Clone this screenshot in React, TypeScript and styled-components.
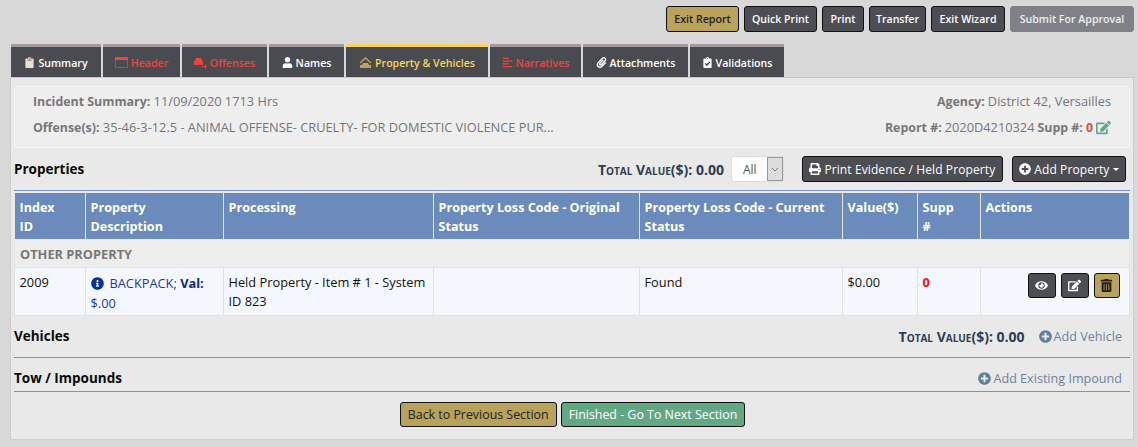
import React from "react"
import styled, { createGlobalStyle, css } from "styled-components"
import {
  FaAlignLeft,
  FaClipboard,
  FaClipboardCheck,
  FaEdit,
  FaEye,
  FaInfoCircle,
  FaPaperclip,
  FaPlusCircle,
  FaPrint,
  FaTrashAlt,
  FaUser,
} from "react-icons/fa"

const GlobalStyle = createGlobalStyle`
  html, body {
    margin: 0;
    padding: 0;
    background: #d8d8d8;
    font-family: "Open Sans", "Liberation Sans", sans-serif;
    font-size: 12px;
    color: #111;
  }
  * { box-sizing: border-box; }
`

const Page = styled.div`
  width: 1138px;
  height: 447px;
  padding: 6px 4px 0 10px;
  overflow: hidden;
`

const TopBar = styled.div`
  display: flex;
  justify-content: flex-end;
  gap: 5px;
  height: 26px;
  margin-bottom: 12px;
`

type Tone = "dark" | "gold" | "green" | "muted"

const toneStyles = {
  dark: css`
    background: #4d4e53;
    color: #fff;
    border-color: #111;
  `,
  gold: css`
    background: #b9a25a;
    color: #222;
    border-color: #111;
  `,
  green: css`
    background: #62a884;
    color: #fff;
    border-color: #111;
  `,
  muted: css`
    background: #808186;
    color: #eee;
    border-color: #808186;
  `,
}

const Button = styled.button<{ $tone: Tone }>`
  display: inline-flex;
  align-items: center;
  justify-content: center;
  height: 26px;
  padding: 0 7px;
  border: 1px solid;
  border-radius: 3px;
  font-family: inherit;
  font-size: 10.6px;
  font-weight: 600;
  white-space: nowrap;
  ${(p) => toneStyles[p.$tone]}
`

const TopButton = styled(Button)<{ $width: number }>`
  width: ${(p) => p.$width}px;
  padding: 0;
`

const TabRow = styled.div`
  display: flex;
  gap: 2px;
  height: 33px;
  padding-left: 1px;
`

const Tab = styled.div<{ $color: string; $width: number; $active?: boolean }>`
  display: flex;
  align-items: center;
  justify-content: center;
  gap: 3px;
  height: 33px;
  padding-top: 1px;
  width: ${(p) => p.$width}px;
  background: #4a4b50;
  border-top: 3px solid ${(p) => (p.$active ? "#f8d45c" : "#a39b9b")};
  color: ${(p) => p.$color};
  font-size: 10.6px;
  font-weight: 600;
  white-space: nowrap;
  svg {
    font-size: 11px;
  }
`

const Panel = styled.div`
  width: 1124px;
  height: 363px;
  background: #e9e9e9;
  border: 1px solid #cfcfcf;
  border-top-color: #c8c8c8;
  padding: 8px 0 0 3px;
`

const SummaryBox = styled.div`
  width: 1116px;
  height: 62px;
  padding: 1px 18px 0 18px;
  background: #eeeeee;
  border: 1px solid #f6f6f6;
  border-radius: 3px;
  display: grid;
  grid-template-columns: 1fr auto;
  grid-auto-rows: 26px;
  align-items: center;
  color: #76767a;
  font-size: 12.8px;
  b {
    font-size: 12.4px;
    font-weight: 700;
    color: #77777a;
  }
`

const RightCell = styled.div`
  display: flex;
  justify-content: flex-end;
  align-items: center;
  gap: 3px;
`

const SuppValue = styled.b`
  && {
    color: #f04a36;
  }
`

const SectionHead = styled.div<{ $height: number; $top?: number }>`
  display: flex;
  align-items: center;
  justify-content: space-between;
  height: ${(p) => p.$height}px;
  width: 1116px;
  padding-top: ${(p) => p.$top ?? 0}px;
  border-bottom: 1px solid #7f8fc0;
`

const SectionTitle = styled.div`
  font-size: 13.5px;
  font-weight: 700;
  color: #0a0a0a;
`

const HeadTools = styled.div`
  display: flex;
  align-items: center;
`

const TotalValue = styled.div<{ $gap: number }>`
  font-size: 14px;
  font-weight: 700;
  font-variant: small-caps;
  color: #2e3d52;
  margin-right: ${(p) => p.$gap}px;
`

const FakeSelect = styled.div`
  display: flex;
  width: 53px;
  height: 26px;
  margin-right: 18px;
  background: #fff;
  border: 1px solid #ddd;
  border-radius: 3px;
  color: #555;
  font-size: 12px;
  align-items: center;
  padding-left: 11px;
  position: relative;
`

const SelectArrow = styled.span`
  position: absolute;
  right: 0;
  top: 0;
  bottom: 0;
  width: 16px;
  background: #ddd;
  border: 1px solid #999;
  display: flex;
  align-items: center;
  justify-content: center;
`

const ToolButton = styled(Button)<{ $gap?: number }>`
  font-weight: 400;
  font-size: 12px;
  padding: 0 6.5px;
  gap: 3px;
  margin-left: ${(p) => p.$gap ?? 0}px;
  letter-spacing: 0.1px;
  svg {
    font-size: 12px;
  }
`

const Caret = styled.span`
  width: 0;
  height: 0;
  border-left: 3px solid transparent;
  border-right: 3px solid transparent;
  border-top: 3px solid #fff;
`

const TopRight = styled(HeadTools)`
  margin-right: 4px;
`

const Table = styled.table`
  width: 1115px;
  table-layout: fixed;
  border-collapse: collapse;
  font-size: 12.8px;
`

const Th = styled.th`
  height: 47px;
  padding: 5px 4.5px 0;
  vertical-align: top;
  text-align: left;
  background: #6a8bbb;
  color: #fff;
  font-size: 12.6px;
  font-weight: 700;
  line-height: 19px;
  border: 1px solid #e6e6e6;
  border-top: 2px solid #e9e9e9;
`

const GroupCell = styled.td`
  height: 28px;
  padding: 2px 5px 0;
  background: #ededed;
  color: #77777a;
  font-weight: 700;
  border: 1px solid #e2e2e2;
`

const Td = styled.td`
  height: 48px;
  padding: 5px 4.5px 0;
  vertical-align: top;
  line-height: 19px;
  background: #f4f8fe;
  color: #111;
  border: 1px solid #dfe2e6;
`

const DescLink = styled.span`
  display: inline-block;
  line-height: 20px;
  color: #1a3a9a;
  b {
    color: #0c2a80;
    font-weight: 700;
  }
  svg {
    color: #0c2f9c;
    font-size: 13px;
    vertical-align: -2px;
    margin-right: 6px;
  }
`

const ZeroSupp = styled.span`
  color: #f01010;
  font-weight: 700;
`

const ActionRow = styled.div`
  display: flex;
  justify-content: flex-end;
  gap: 5px;
  margin-right: 5px;
`

const IconButton = styled.button<{ $tone: Tone; $wide?: boolean }>`
  width: ${(p) => (p.$wide ? 28 : 26)}px;
  height: 25px;
  padding: 0;
  border: 1px solid;
  border-radius: 3px;
  display: flex;
  align-items: center;
  justify-content: center;
  font-size: 13px;
  ${(p) => toneStyles[p.$tone]}
`

const AddLink = styled.span`
  display: inline-flex;
  align-items: center;
  gap: 2px;
  color: #708299;
  font-size: 12.6px;
  margin-right: 8px;
  svg {
    color: #5f7f9f;
    font-size: 13px;
  }
`

const Footer = styled.div`
  display: flex;
  justify-content: center;
  gap: 4px;
  width: 1117px;
  margin-top: 10px;
`

const FooterButton = styled(Button)`
  font-weight: 400;
  font-size: 12.4px;
  padding: 0 7px;
  height: 25px;
`

const HeaderIcon = () => (
  <svg width="13" height="11" viewBox="0 0 13 11">
    <path d="M0 0h13v3H0z" fill="currentColor" />
    <path d="M.5 3v8M12.5 3v8M.5 10.5h12" stroke="currentColor" strokeOpacity="0.7" fill="none" />
  </svg>
)

const OffenseIcon = () => (
  <svg width="13" height="12" viewBox="0 0 13 12">
    <path d="M2 1h5l1 3h1v4H0V4h1z" fill="currentColor" />
    <path d="M8 9h3V7l2 2.5L11 12v-2H8z" fill="currentColor" />
  </svg>
)

const PropertyIcon = () => (
  <svg width="13" height="12" viewBox="0 0 13 12" color="#b9a25a">
    <path d="M1 6l5.5-5L12 6" fill="none" stroke="currentColor" strokeWidth="1.4" />
    <path d="M3 8l1-2h5l1 2h2v3H1V8z" fill="currentColor" />
  </svg>
)

const topButtons: { label: string; tone: Tone; width: number }[] = [
  { label: "Exit Report", tone: "gold", width: 73 },
  { label: "Quick Print", tone: "dark", width: 73 },
  { label: "Print", tone: "dark", width: 42 },
  { label: "Transfer", tone: "dark", width: 57 },
  { label: "Exit Wizard", tone: "dark", width: 74 },
  { label: "Submit For Approval", tone: "muted", width: 124 },
]

const tabs = [
  { label: "Summary", color: "#fff", width: 90, icon: <FaClipboard color="#e8e0c8" /> },
  { label: "Header", color: "#f0443a", width: 77, icon: <HeaderIcon /> },
  { label: "Offenses", color: "#f0443a", width: 85, icon: <OffenseIcon /> },
  { label: "Names", color: "#fff", width: 75, icon: <FaUser /> },
  { label: "Property & Vehicles", color: "#f8d45c", width: 142, active: true, icon: <PropertyIcon /> },
  { label: "Narratives", color: "#f0443a", width: 91, icon: <FaAlignLeft /> },
  { label: "Attachments", color: "#fff", width: 105, icon: <FaPaperclip /> },
  { label: "Validations", color: "#fff", width: 94, icon: <FaClipboardCheck /> },
]

const columns = [
  { label: <>Index<br />ID</>, width: 71 },
  { label: <>Property<br />Description</>, width: 138 },
  { label: "Processing", width: 210 },
  { label: <>Property Loss Code - Original<br />Status</>, width: 206 },
  { label: <>Property Loss Code - Current<br />Status</>, width: 203 },
  { label: "Value($)", width: 75 },
  { label: <>Supp<br />#</>, width: 63 },
  { label: "Actions", width: 149 },
]

export default function App() {
  return (
    <Page>
      <GlobalStyle />
      <TopBar>
        {topButtons.map((b) => (
          <TopButton key={b.label} $tone={b.tone} $width={b.width}>
            {b.label}
          </TopButton>
        ))}
      </TopBar>
      <TabRow>
        {tabs.map((t) => (
          <Tab key={t.label} $color={t.color} $width={t.width} $active={t.active}>
            {t.icon}
            {t.label}
          </Tab>
        ))}
      </TabRow>
      <Panel>
        <SummaryBox>
          <div>
            <b>Incident Summary:</b> 11/09/2020 1713 Hrs
          </div>
          <RightCell>
            <b>Agency:</b> District 42, Versailles
          </RightCell>
          <div>
            <b>Offense(s):</b> 35-46-3-12.5 - ANIMAL OFFENSE- CRUELTY- FOR DOMESTIC VIOLENCE PUR...
          </div>
          <RightCell>
            <b>Report #:</b> 2020D4210324 <b>Supp #:</b> <SuppValue>0</SuppValue>
            <FaEdit color="#62a884" size={15} />
          </RightCell>
        </SummaryBox>
        <SectionHead $height={43}>
          <SectionTitle>Properties</SectionTitle>
          <TopRight>
            <TotalValue $gap={7}>Total Value($): 0.00</TotalValue>
            <FakeSelect>
              All
              <SelectArrow>
                <svg width="8" height="5" viewBox="0 0 8 5">
                  <path d="M1 1l3 3 3-3" fill="none" stroke="#777" />
                </svg>
              </SelectArrow>
            </FakeSelect>
            <ToolButton $tone="dark">
              <FaPrint />
              Print Evidence / Held Property
            </ToolButton>
            <ToolButton $tone="dark" $gap={9}>
              <FaPlusCircle />
              Add Property
              <Caret />
            </ToolButton>
          </TopRight>
        </SectionHead>
        <Table>
          <colgroup>
            {columns.map((c, i) => (
              <col key={i} width={c.width} />
            ))}
          </colgroup>
          <thead>
            <tr>
              {columns.map((c, i) => (
                <Th key={i}>{c.label}</Th>
              ))}
            </tr>
          </thead>
          <tbody>
            <tr>
              <GroupCell colSpan={8}>OTHER PROPERTY</GroupCell>
            </tr>
            <tr>
              <Td>2009</Td>
              <Td>
                <DescLink>
                  <FaInfoCircle />
                  BACKPACK; <b>Val:</b>
                  <br />
                  $.00
                </DescLink>
              </Td>
              <Td>Held Property - Item # 1 - System ID 823</Td>
              <Td />
              <Td>Found</Td>
              <Td>$0.00</Td>
              <Td>
                <ZeroSupp>0</ZeroSupp>
              </Td>
              <Td>
                <ActionRow>
                  <IconButton $tone="dark" $wide>
                    <FaEye />
                  </IconButton>
                  <IconButton $tone="dark" $wide>
                    <FaEdit />
                  </IconButton>
                  <IconButton $tone="gold">
                    <FaTrashAlt />
                  </IconButton>
                </ActionRow>
              </Td>
            </tr>
          </tbody>
        </Table>
        <SectionHead $height={42}>
          <SectionTitle>Vehicles</SectionTitle>
          <HeadTools>
            <TotalValue $gap={14}>Total Value($): 0.00</TotalValue>
            <AddLink>
              <FaPlusCircle />
              Add Vehicle
            </AddLink>
          </HeadTools>
        </SectionHead>
        <SectionHead $height={34} $top={8}>
          <SectionTitle>Tow / Impounds</SectionTitle>
          <AddLink>
            <FaPlusCircle />
            Add Existing Impound
          </AddLink>
        </SectionHead>
        <Footer>
          <FooterButton $tone="gold">Back to Previous Section</FooterButton>
          <FooterButton $tone="green">Finished - Go To Next Section</FooterButton>
        </Footer>
      </Panel>
    </Page>
  )
}
